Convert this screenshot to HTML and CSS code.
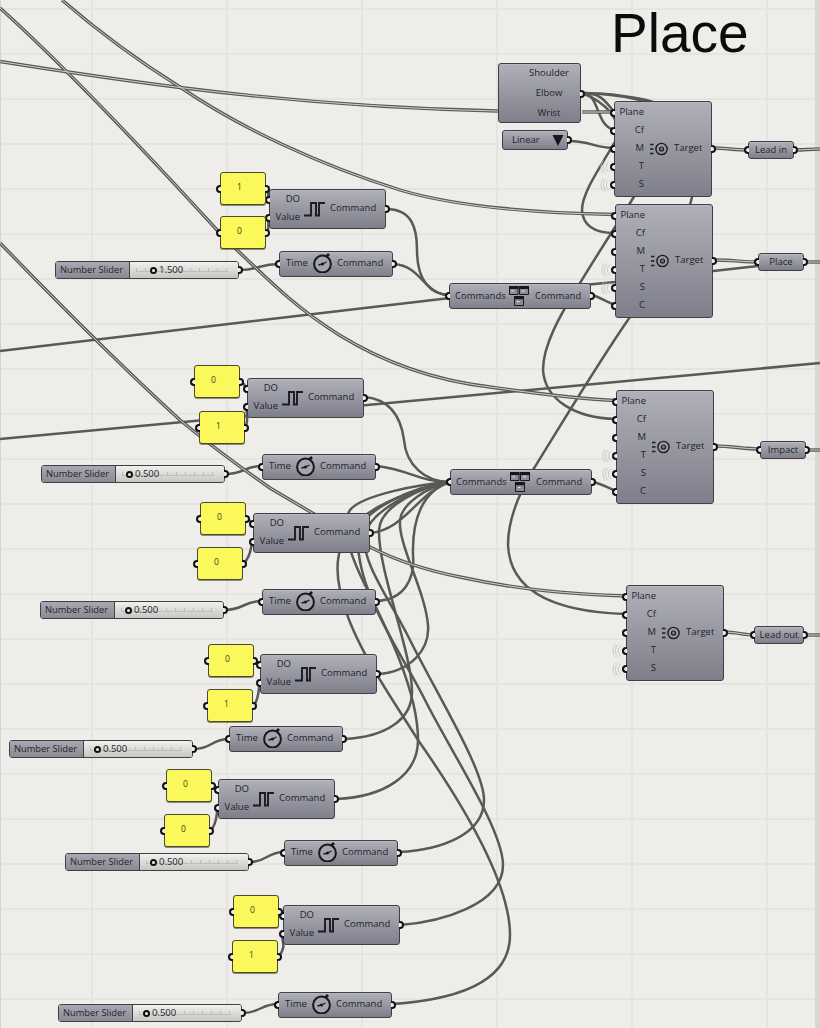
FILE: index.html
```html
<!DOCTYPE html>
<html lang="en">
<head>
<meta charset="utf-8">
<title>Place</title>
<link rel="stylesheet" href="styles.css">
</head>
<body>
<main class="canvas">
  <svg class="defs" width="0" height="0" aria-hidden="true">
    <symbol id="ic-pulse" viewBox="0 0 21 16"><path d="M0 14.5H7V2H12V14.5H15V2H21" fill="none" stroke="#1b1b22" stroke-width="1.9"/></symbol>
    <symbol id="ic-target" viewBox="0 0 18 14"><path d="M0 2.5H3.5M0 7H3.5M0 11.5H3.5" stroke="#1b1b22" stroke-width="1.6"/><circle cx="11.5" cy="7" r="5.6" fill="none" stroke="#1b1b22" stroke-width="1.4"/><circle cx="11.5" cy="7" r="2" fill="#7d7d88" stroke="#1b1b22" stroke-width="1.2"/></symbol>
    <symbol id="ic-clock" viewBox="0 0 20 20"><circle cx="9.5" cy="11" r="8.4" fill="#a4a4ae" stroke="#17171c" stroke-width="2"/><path d="M13.5 3.5L16 1" stroke="#17171c" stroke-width="2.6"/><path d="M9.5 11L13.5 9M9.5 11L5.5 12" stroke="#17171c" stroke-width="1.3"/><circle cx="9.5" cy="11" r="1.5" fill="#17171c"/></symbol>
    <symbol id="ic-merge" viewBox="0 0 20 20"><path d="M0.5 0.5H9V8.5H0.5ZM10.5 0.5H19.5V8.5H10.5ZM5.5 10.5H14.5V19.5H5.5Z" fill="#8c8c97" stroke="#17171c"/><path d="M0 0H9.5V3H0ZM10 0H20V3H10ZM5 10H15V13.2H5Z" fill="#17171c"/><path d="M2.5 5H5M13 5H16M8 15.5H10.5" stroke="#e4e4e6"/></symbol>
    <symbol id="ic-ripple" viewBox="0 0 10 14"><path d="M9 1.5A7 7 0 0 0 9 12.5M6 0.5A9.5 9.5 0 0 0 6 13.5M3 0.5A12 12 0 0 0 3 13.5" fill="none" stroke="#c2c1bc" stroke-width="0.8"/></symbol>
    <g id="tree-wires">
      <path d="M0 61.5C60 71 120 80 180 87.5S360 108 498 111"/>
      <path d="M582 112H614"/>
      <path d="M62 0C100 33 140 62 180 87C240 128 320 165 400 190C460 208 540 213 614 214.5"/>
      <path d="M0 8C60 62 130 135 217 230L237 250C280 290 350 370 490 387C540 394 580 399 616 400.5"/>
      <path d="M0 243C60 305 120 365 180 420C210 445 240 467 270 488L370 547C395 560 425 570 460 577C520 590 570 594 626 596"/>
      <path d="M713 148C725 148 735 150 749 150"/>
      <path d="M795 150C805 150 810 149 820 149"/>
      <path d="M714 260C730 260 745 262 758 262"/>
      <path d="M805 262H820"/>
      <path d="M715 446C730 446 745 449 760 449"/>
      <path d="M807 450H820"/>
      <path d="M725 632C735 632 745 635 754 635"/>
      <path d="M805 635H820"/>
    </g>
  </svg>

  <div class="edge"></div>

  <svg class="wires" viewBox="0 0 820 1028">
    <g class="thick">
      <path d="M0 351L450 298L615 282L758 266"/>
      <path d="M0 439L820 363"/>
      <path d="M386 209C412 209 417 228 417 250C417 280 430 295 450 295"/>
      <path d="M394 264C422 266 424 295 450 295"/>
      <path d="M592 295C600 297 606 302 615 305"/>
      <path d="M593 482C602 484 608 488 616 491"/>
      <path d="M569 141C590 141 595 148 614 148"/>
      <path d="M582 93C600 93 595 125 614 130"/>
      <path d="M582 93C600 93 605 100 614 112"/>
      <path d="M582 93C610 93 640 98 650 101C680 110 660 160 635 195C620 220 600 250 580 283C560 315 543 345 543 370C545 400 575 418 616 419"/>
      <path d="M582 93C620 94 640 100 660 105C700 130 700 170 692 197C685 230 650 285 630 317C600 360 570 410 533 470C515 500 508 525 508 545C510 595 560 612 626 614"/>
      <path d="M582 93C600 100 630 120 612 147C595 175 582 195 582 210C583 228 598 233 615 233"/>
      <path d="M365 397C395 400 402 425 404 440C406 465 425 482 450 482"/>
      <path d="M377 466C410 470 420 482 450 482"/>
      <path d="M370 533C405 530 418 492 450 482"/>
      <path d="M376 601C405 600 415 578 413 555C412 520 422 491 450 482"/>
      <path d="M378 674C410 672 430 650 428 625C425 590 398 545 400 520C402 503 428 487 450 482"/>
      <path d="M344 739C385 737 413 720 412 690C411 650 378 570 379 530C380 505 425 486 450 482"/>
      <path d="M336 799C385 797 418 775 418 740C418 690 385 625 365 585C350 555 340 525 350 510C362 495 420 484 450 482"/>
      <path d="M399 852C440 850 484 835 484 800C484 770 440 700 410 640C390 600 360 560 365 535C370 510 420 486 450 482"/>
      <path d="M400 925C440 922 503 905 503 865C503 830 450 750 425 700C400 650 355 590 358 535C360 510 415 486 450 482"/>
      <path d="M393 1004C450 1000 510 985 510 935C510 880 460 800 418 740C390 695 350 640 340 590C330 545 345 505 450 482"/>
      <path d="M240 270C258 270 260 264 279 264"/>
      <path d="M226 474C244 474 244 466 262 466"/>
      <path d="M225 610C243 610 244 601 262 601"/>
      <path d="M194 749C212 749 211 739 229 739"/>
      <path d="M250 862C267 862 267 852 284 852"/>
      <path d="M243 1013C260 1013 261 1004 278 1004"/>
      <path d="M267 188C269 192 267 196 269 199"/>
      <path d="M267 232C270 228 267 222 269 217"/>
      <path d="M241 381C244 383 244 386 247 388"/>
      <path d="M245 427C250 420 245 412 247 407"/>
      <path d="M246 518C249 519 250 522 253 523"/>
      <path d="M244 563C252 555 250 547 253 541"/>
      <path d="M255 660C257 661 258 663 260 664"/>
      <path d="M254 705C260 697 258 688 260 682"/>
      <path d="M213 785C215 786 216 788 218 789"/>
      <path d="M211 830C218 822 216 813 218 807"/>
      <path d="M279 911C281 912 281 914 283 915"/>
      <path d="M279 956C288 945 280 940 283 934"/>
    </g>
    <use href="#tree-wires" class="tree-outer"/>
    <use href="#tree-wires" class="tree-inner"/>
  </svg>

  <h1 class="title">Place</h1>

  <div class="node params n-params">
    <div class="param">Shoulder</div>
    <div class="param">Elbow<i class="go"></i></div>
    <div class="param">Wrist</div>
  </div>

  <div class="node value-list n-linear">
    <span class="vl-text">Linear</span>
    <svg class="vl-arrow" viewBox="0 0 12 12"><path d="M0 0H12L6 12Z"/></svg>
    <i class="go"></i>
  </div>

  <div class="node target n-ta">
    <div class="ins"><div class="pin">Plane<i class="gi"></i></div><div class="pin">Cf<i class="gi"></i></div><div class="pin">M<i class="gi"></i></div><div class="pin">T<i class="gi"></i><svg class="ripple"><use href="#ic-ripple"/></svg></div><div class="pin">S<i class="gi"></i><svg class="ripple"><use href="#ic-ripple"/></svg></div></div>
    <svg class="icon ic-t"><use href="#ic-target"/></svg>
    <div class="out">Target<i class="go"></i></div>
  </div>
  <div class="node target n-tb">
    <div class="ins"><div class="pin">Plane<i class="gi"></i></div><div class="pin">Cf<i class="gi"></i></div><div class="pin">M<i class="gi"></i></div><div class="pin">T<i class="gi"></i><svg class="ripple"><use href="#ic-ripple"/></svg></div><div class="pin">S<i class="gi"></i><svg class="ripple"><use href="#ic-ripple"/></svg></div><div class="pin">C<i class="gi"></i></div></div>
    <svg class="icon ic-t"><use href="#ic-target"/></svg>
    <div class="out">Target<i class="go"></i></div>
  </div>
  <div class="node target n-tc">
    <div class="ins"><div class="pin">Plane<i class="gi"></i></div><div class="pin">Cf<i class="gi"></i></div><div class="pin">M<i class="gi"></i></div><div class="pin">T<i class="gi"></i><svg class="ripple"><use href="#ic-ripple"/></svg></div><div class="pin">S<i class="gi"></i><svg class="ripple"><use href="#ic-ripple"/></svg></div><div class="pin">C<i class="gi"></i></div></div>
    <svg class="icon ic-t"><use href="#ic-target"/></svg>
    <div class="out">Target<i class="go"></i></div>
  </div>
  <div class="node target n-td">
    <div class="ins"><div class="pin">Plane<i class="gi"></i></div><div class="pin">Cf<i class="gi"></i></div><div class="pin">M<i class="gi"></i></div><div class="pin">T<i class="gi"></i><svg class="ripple"><use href="#ic-ripple"/></svg></div><div class="pin">S<i class="gi"></i><svg class="ripple"><use href="#ic-ripple"/></svg></div></div>
    <svg class="icon ic-t"><use href="#ic-target"/></svg>
    <div class="out">Target<i class="go"></i></div>
  </div>

  <div class="node relay n-r1"><i class="gi"></i>Lead in<i class="go"></i></div>
  <div class="node relay n-r2"><i class="gi"></i>Place<i class="go"></i></div>
  <div class="node relay n-r3"><i class="gi"></i>Impact<i class="go"></i></div>
  <div class="node relay n-r4"><i class="gi"></i>Lead out<i class="go"></i></div>

  <div class="node merge n-m1">
    <div class="ins"><div class="pin">Commands<i class="gi"></i></div></div>
    <svg class="icon ic-m"><use href="#ic-merge"/></svg>
    <div class="out">Command<i class="go"></i></div>
  </div>
  <div class="node merge n-m2">
    <div class="ins"><div class="pin">Commands<i class="gi"></i></div></div>
    <svg class="icon ic-m"><use href="#ic-merge"/></svg>
    <div class="out">Command<i class="go"></i></div>
  </div>

  <div class="node do n-da"><div class="ins"><div class="pin">DO<i class="gi"></i></div><div class="pin">Value<i class="gi"></i></div></div><svg class="icon ic-p"><use href="#ic-pulse"/></svg><div class="out">Command<i class="go"></i></div></div>
  <div class="node do n-db"><div class="ins"><div class="pin">DO<i class="gi"></i></div><div class="pin">Value<i class="gi"></i></div></div><svg class="icon ic-p"><use href="#ic-pulse"/></svg><div class="out">Command<i class="go"></i></div></div>
  <div class="node do n-dc"><div class="ins"><div class="pin">DO<i class="gi"></i></div><div class="pin">Value<i class="gi"></i></div></div><svg class="icon ic-p"><use href="#ic-pulse"/></svg><div class="out">Command<i class="go"></i></div></div>
  <div class="node do n-dd"><div class="ins"><div class="pin">DO<i class="gi"></i></div><div class="pin">Value<i class="gi"></i></div></div><svg class="icon ic-p"><use href="#ic-pulse"/></svg><div class="out">Command<i class="go"></i></div></div>
  <div class="node do n-de"><div class="ins"><div class="pin">DO<i class="gi"></i></div><div class="pin">Value<i class="gi"></i></div></div><svg class="icon ic-p"><use href="#ic-pulse"/></svg><div class="out">Command<i class="go"></i></div></div>
  <div class="node do n-df"><div class="ins"><div class="pin">DO<i class="gi"></i></div><div class="pin">Value<i class="gi"></i></div></div><svg class="icon ic-p"><use href="#ic-pulse"/></svg><div class="out">Command<i class="go"></i></div></div>

  <div class="node time n-ca"><div class="ins"><div class="pin">Time<i class="gi"></i></div></div><svg class="icon ic-c"><use href="#ic-clock"/></svg><div class="out">Command<i class="go"></i></div></div>
  <div class="node time n-cb"><div class="ins"><div class="pin">Time<i class="gi"></i></div></div><svg class="icon ic-c"><use href="#ic-clock"/></svg><div class="out">Command<i class="go"></i></div></div>
  <div class="node time n-cc"><div class="ins"><div class="pin">Time<i class="gi"></i></div></div><svg class="icon ic-c"><use href="#ic-clock"/></svg><div class="out">Command<i class="go"></i></div></div>
  <div class="node time n-cd"><div class="ins"><div class="pin">Time<i class="gi"></i></div></div><svg class="icon ic-c"><use href="#ic-clock"/></svg><div class="out">Command<i class="go"></i></div></div>
  <div class="node time n-ce"><div class="ins"><div class="pin">Time<i class="gi"></i></div></div><svg class="icon ic-c"><use href="#ic-clock"/></svg><div class="out">Command<i class="go"></i></div></div>
  <div class="node time n-cf"><div class="ins"><div class="pin">Time<i class="gi"></i></div></div><svg class="icon ic-c"><use href="#ic-clock"/></svg><div class="out">Command<i class="go"></i></div></div>

  <div class="panel n-pa1"><i class="gi"></i>1<i class="go"></i></div>
  <div class="panel n-pa2"><i class="gi"></i>0<i class="go"></i></div>
  <div class="panel n-pb1"><i class="gi"></i>0<i class="go"></i></div>
  <div class="panel n-pb2"><i class="gi"></i>1<i class="go"></i></div>
  <div class="panel n-pc1"><i class="gi"></i>0<i class="go"></i></div>
  <div class="panel n-pc2"><i class="gi"></i>0<i class="go"></i></div>
  <div class="panel n-pd1"><i class="gi"></i>0<i class="go"></i></div>
  <div class="panel n-pd2"><i class="gi"></i>1<i class="go"></i></div>
  <div class="panel n-pe1"><i class="gi"></i>0<i class="go"></i></div>
  <div class="panel n-pe2"><i class="gi"></i>0<i class="go"></i></div>
  <div class="panel n-pf1"><i class="gi"></i>0<i class="go"></i></div>
  <div class="panel n-pf2"><i class="gi"></i>1<i class="go"></i></div>

  <div class="slider n-sa"><div class="sl-name">Number Slider</div><div class="sl-track high"><b class="thumb"></b><span>1.500</span></div><i class="go"></i></div>
  <div class="slider n-sb"><div class="sl-name">Number Slider</div><div class="sl-track"><b class="thumb"></b><span>0.500</span></div><i class="go"></i></div>
  <div class="slider n-sc"><div class="sl-name">Number Slider</div><div class="sl-track"><b class="thumb"></b><span>0.500</span></div><i class="go"></i></div>
  <div class="slider n-sd"><div class="sl-name">Number Slider</div><div class="sl-track"><b class="thumb"></b><span>0.500</span></div><i class="go"></i></div>
  <div class="slider n-se"><div class="sl-name">Number Slider</div><div class="sl-track"><b class="thumb"></b><span>0.500</span></div><i class="go"></i></div>
  <div class="slider n-sf"><div class="sl-name">Number Slider</div><div class="sl-track"><b class="thumb"></b><span>0.500</span></div><i class="go"></i></div>
</main>
</body>
</html>
```

FILE: styles.css
```css
html, body { margin: 0; padding: 0; }
body { width: 820px; height: 1028px; overflow: hidden; }

.canvas {
  position: relative;
  width: 820px;
  height: 1028px;
  overflow: hidden;
  box-sizing: border-box;
  background-color: #eeede9;
  background-image:
    linear-gradient(#d4d3cf, #d4d3cf),
    linear-gradient(to right, #e5e4e0 2px, transparent 2px),
    linear-gradient(to bottom, #e5e4e0 2px, transparent 2px);
  background-size: 1px 100%, 135px 45px, 135px 45px;
  background-position: 0 0, 91px 8px, 91px 8px;
  background-repeat: no-repeat, repeat, repeat;
  font-family: "Open Sans", "Noto Sans", sans-serif;
  font-size: 9.5px;
  color: #23232a;
}

.defs { position: absolute; }
.wires { position: absolute; left: 0; top: 0; width: 820px; height: 1028px; }
.wires path { fill: none; }
.thick { stroke: #5a5955; stroke-width: 2.5; }
.tree-outer { stroke: #5a5955; stroke-width: 3.4; fill: none; }
.tree-inner { stroke: #d2d1cb; stroke-width: 1; fill: none; }

.edge { position: absolute; right: 0; top: 0; width: 5px; height: 100%; background: #d8d7d3; }

.title {
  position: absolute;
  left: 611px;
  top: 2px;
  margin: 0;
  font: 400 55px/63px "Liberation Sans", Arial, sans-serif;
  color: #0c0c0c;
}

/* Node shell */
.node, .slider {
  position: absolute;
  box-sizing: border-box;
  display: flex;
  align-items: center;
  border: 1px solid #3f3f44;
  border-radius: 3px;
  background: linear-gradient(to bottom, #b0b0ba, #7f7f8b);
  box-shadow: inset 0 1px 0 rgba(255,255,255,.12);
}
.ins { flex: none; display: flex; flex-direction: column; }
.pin { position: relative; height: 18px; line-height: 15px; text-align: right; white-space: nowrap; }
.out { position: relative; flex: 1; height: 18px; line-height: 15px; white-space: nowrap; }
.icon { flex: none; display: block; }

/* Grips */
.gi, .go {
  position: absolute;
  top: 50%;
  box-sizing: border-box;
  width: 5px;
  height: 8px;
  margin-top: -4px;
  background: #efeeea;
  border: 2px solid #141414;
}
.gi { left: -5px; border-right: 0; border-radius: 4px 0 0 4px; }
.go { right: -5px; border-left: 0; border-radius: 0 4px 4px 0; }

/* Target nodes */
.target { width: 98px; padding: 2px 0; }
.target .ins { width: 29px; }
.ic-t { width: 18px; height: 14px; margin-left: 6px; }
.target .out { padding-left: 6px; }
.ripple { position: absolute; left: -15px; top: 2px; width: 10px; height: 14px; }

.n-ta { left: 614px; top: 101px; }
.n-tb { left: 615px; top: 204px; }
.n-tc { left: 616px; top: 390px; }
.n-td { left: 626px; top: 585px; }

/* Rhino joints */
.params { display: block; left: 498px; top: 63px; width: 83px; height: 60px; padding-left: 19px; }
.param { position: relative; height: 20px; line-height: 18px; text-align: center; }

/* Value list */
.value-list { left: 502px; top: 130px; width: 66px; height: 20px; padding-left: 9px; }
.vl-text { flex: 1; line-height: 15px; margin-top: -1px; }
.vl-arrow { width: 12px; height: 11px; margin-right: 3px; fill: #17171c; }

/* Relays */
.relay { justify-content: center; height: 18px; line-height: 16px; }
.n-r1 { left: 748px; top: 141px; width: 46px; }
.n-r2 { left: 758px; top: 253px; width: 46px; }
.n-r3 { left: 760px; top: 441px; width: 46px; }
.n-r4 { left: 754px; top: 626px; width: 50px; }

/* Merge */
.merge { width: 142px; height: 26px; }
.merge .ins { width: 55px; }
.merge .pin { text-align: left; padding-left: 5px; line-height: 17px; }
.ic-m { width: 20px; height: 20px; margin-left: 4px; }
.merge .out { padding-left: 6px; line-height: 17px; }
.n-m1 { left: 449px; top: 283px; }
.n-m2 { left: 450px; top: 469px; }

/* DO */
.do { width: 117px; height: 40px; }
.do .ins { width: 30px; }
.ic-p { width: 21px; height: 16px; margin-left: 4px; }
.do .out { padding-left: 5px; }
.n-da { left: 269px; top: 189px; }
.n-db { left: 247px; top: 378px; }
.n-dc { left: 253px; top: 513px; }
.n-dd { left: 260px; top: 654px; }
.n-de { left: 218px; top: 779px; }
.n-df { left: 283px; top: 905px; }

/* Time */
.time { width: 114px; height: 26px; }
.time .ins { width: 27px; }
.time .pin { text-align: left; padding-left: 6px; }
.ic-c { width: 20px; height: 20px; margin-left: 6px; margin-top: -2px; }
.time .out { padding-left: 4px; }
.n-ca { left: 279px; top: 251px; }
.n-cb { left: 262px; top: 454px; }
.n-cc { left: 262px; top: 589px; }
.n-cd { left: 229px; top: 726px; }
.n-ce { left: 284px; top: 840px; }
.n-cf { left: 278px; top: 992px; }

/* Panels */
.panel {
  position: absolute;
  box-sizing: border-box;
  display: flex;
  align-items: center;
  justify-content: center;
  width: 46px;
  height: 33px;
  padding: 0 7px 4px 0;
  background: #fbf85b;
  border: 1px solid #4a4a2c;
  border-radius: 3px;
  box-shadow: 0 1px 0 rgba(74,74,44,.6);
  font-size: 8.5px;
  color: #3a3a20;
}
.n-pa1 { left: 220px; top: 172px; }
.n-pa2 { left: 220px; top: 216px; }
.n-pb1 { left: 194px; top: 365px; }
.n-pb2 { left: 199px; top: 411px; }
.n-pc1 { left: 200px; top: 502px; }
.n-pc2 { left: 197px; top: 547px; }
.n-pd1 { left: 208px; top: 644px; }
.n-pd2 { left: 207px; top: 689px; }
.n-pe1 { left: 166px; top: 769px; }
.n-pe2 { left: 164px; top: 814px; }
.n-pf1 { left: 233px; top: 895px; }
.n-pf2 { left: 232px; top: 940px; }

/* Sliders */
.slider { width: 184px; height: 18px; align-items: stretch; background: none; }
.sl-name {
  flex: none;
  width: 74px;
  padding-left: 4px;
  box-sizing: border-box;
  font-size: 9.3px;
  line-height: 15px;
  border-right: 1px solid #3f3f44;
  border-radius: 2px 0 0 2px;
  background: linear-gradient(to bottom, #a9a9b3, #8a8a95);
}
.sl-track {
  flex: 1;
  display: flex;
  align-items: center;
  gap: 2px;
  padding-left: 10px;
  border-radius: 0 2px 2px 0;
  background:
    linear-gradient(#bdbdba, #bdbdba) 6px 9px / 92px 1px no-repeat,
    repeating-linear-gradient(90deg, #bdbdba 0 1px, transparent 1px 9px) 6px 6px / 92px 3px no-repeat,
    linear-gradient(to bottom, #f0f0ed, #c6c6c3);
}
.sl-track.high { padding-left: 20px; }
.sl-track span { line-height: 15px; margin-top: -1px; }
.thumb { width: 7px; height: 7px; box-sizing: border-box; border: 2px solid #111; border-radius: 50%; background: #f2f2f0; }
.n-sa { left: 55px; top: 261px; }
.n-sb { left: 41px; top: 465px; }
.n-sc { left: 40px; top: 601px; }
.n-sd { left: 9px; top: 740px; }
.n-se { left: 65px; top: 853px; }
.n-sf { left: 58px; top: 1004px; }
```
